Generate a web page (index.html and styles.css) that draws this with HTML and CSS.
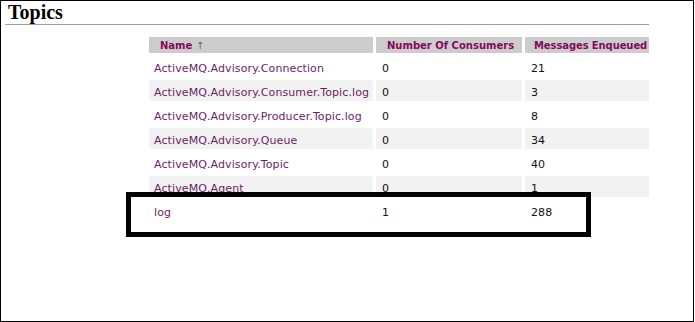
FILE: index.html
```html
<!DOCTYPE html>
<html lang="en">
<head>
    <meta charset="UTF-8">
    <title>Topics</title>
    <link rel="stylesheet" href="styles.css">
</head>
<body>
    <div class="frame">
        <div class="content">
            <h1>Topics</h1>
            <table class="topics">
                <thead>
                    <tr>
                        <th class="col-name"><a href="#">Name</a> <span class="sort">&uarr;</span></th>
                        <th class="col-consumers"><a href="#">Number Of Consumers</a></th>
                        <th class="col-enqueued"><a href="#">Messages Enqueued</a></th>
                    </tr>
                </thead>
                <tbody>
                    <tr><td><a href="#">ActiveMQ.Advisory.Connection</a></td><td>0</td><td>21</td></tr>
                    <tr class="odd"><td><a href="#">ActiveMQ.Advisory.Consumer.Topic.log</a></td><td>0</td><td>3</td></tr>
                    <tr><td><a href="#">ActiveMQ.Advisory.Producer.Topic.log</a></td><td>0</td><td>8</td></tr>
                    <tr class="odd"><td><a href="#">ActiveMQ.Advisory.Queue</a></td><td>0</td><td>34</td></tr>
                    <tr><td><a href="#">ActiveMQ.Advisory.Topic</a></td><td>0</td><td>40</td></tr>
                    <tr class="odd"><td><a href="#">ActiveMQ.Agent</a></td><td>0</td><td>1</td></tr>
                    <tr><td><a href="#">log</a></td><td>1</td><td>288</td></tr>
                </tbody>
            </table>
        </div>
        <!-- marks the row we care about -->
        <div class="highlight"></div>
    </div>
</body>
</html>
```

FILE: styles.css
```css
body {
    margin: 0;
    background: #fff;
}
.frame {
    position: relative;
    width: 694px;
    height: 322px;
    box-sizing: border-box;
    border: 1px solid #000;
    overflow: hidden;
}
.content {
    margin-left: 4px;
    width: 644px;
    overflow: hidden;
}
h1 {
    margin: 0;
    padding: 0 0 0 3px;
    height: 23px;
    line-height: 22px;
    font-family: "Liberation Serif", serif;
    font-size: 20px;
    font-weight: bold;
    color: #000;
    border-bottom: 1px solid #a0a0a0;
}
.topics {
    margin: 9px 0 0 141px;
    width: 512px;
    table-layout: fixed;
    border-collapse: separate;
    border-spacing: 3px;
    font-family: "DejaVu Sans", Verdana, sans-serif;
    font-size: 11px;
    letter-spacing: 0.1px;
}
.topics a {
    text-decoration: none;
    color: #6e1c68;
}
.topics th {
    height: 16px;
    padding: 0 0 0 11px;
    background: #cccccc;
    text-align: left;
    font-size: 10px;
    font-weight: bold;
    letter-spacing: 0;
    white-space: nowrap;
}
.topics th.col-enqueued {
    padding-left: 9px;
    letter-spacing: -0.1px;
}
.topics th a {
    color: #850a5e;
}
.topics .sort {
    color: #666;
    font-weight: normal;
}
.col-name { width: 213px; }
.col-consumers { width: 135px; }
.col-enqueued { width: 121px; }
.topics td {
    height: 16px;
    padding: 5px 0 0 5px;
    line-height: 16px;
    color: #111;
    white-space: nowrap;
}
.topics td + td {
    padding-left: 6px;
}
.topics tr.odd td {
    background: #f2f2f2;
}
.highlight {
    position: absolute;
    left: 125px;
    top: 191px;
    width: 455px;
    height: 35px;
    border: 5px solid #000;
}
```
